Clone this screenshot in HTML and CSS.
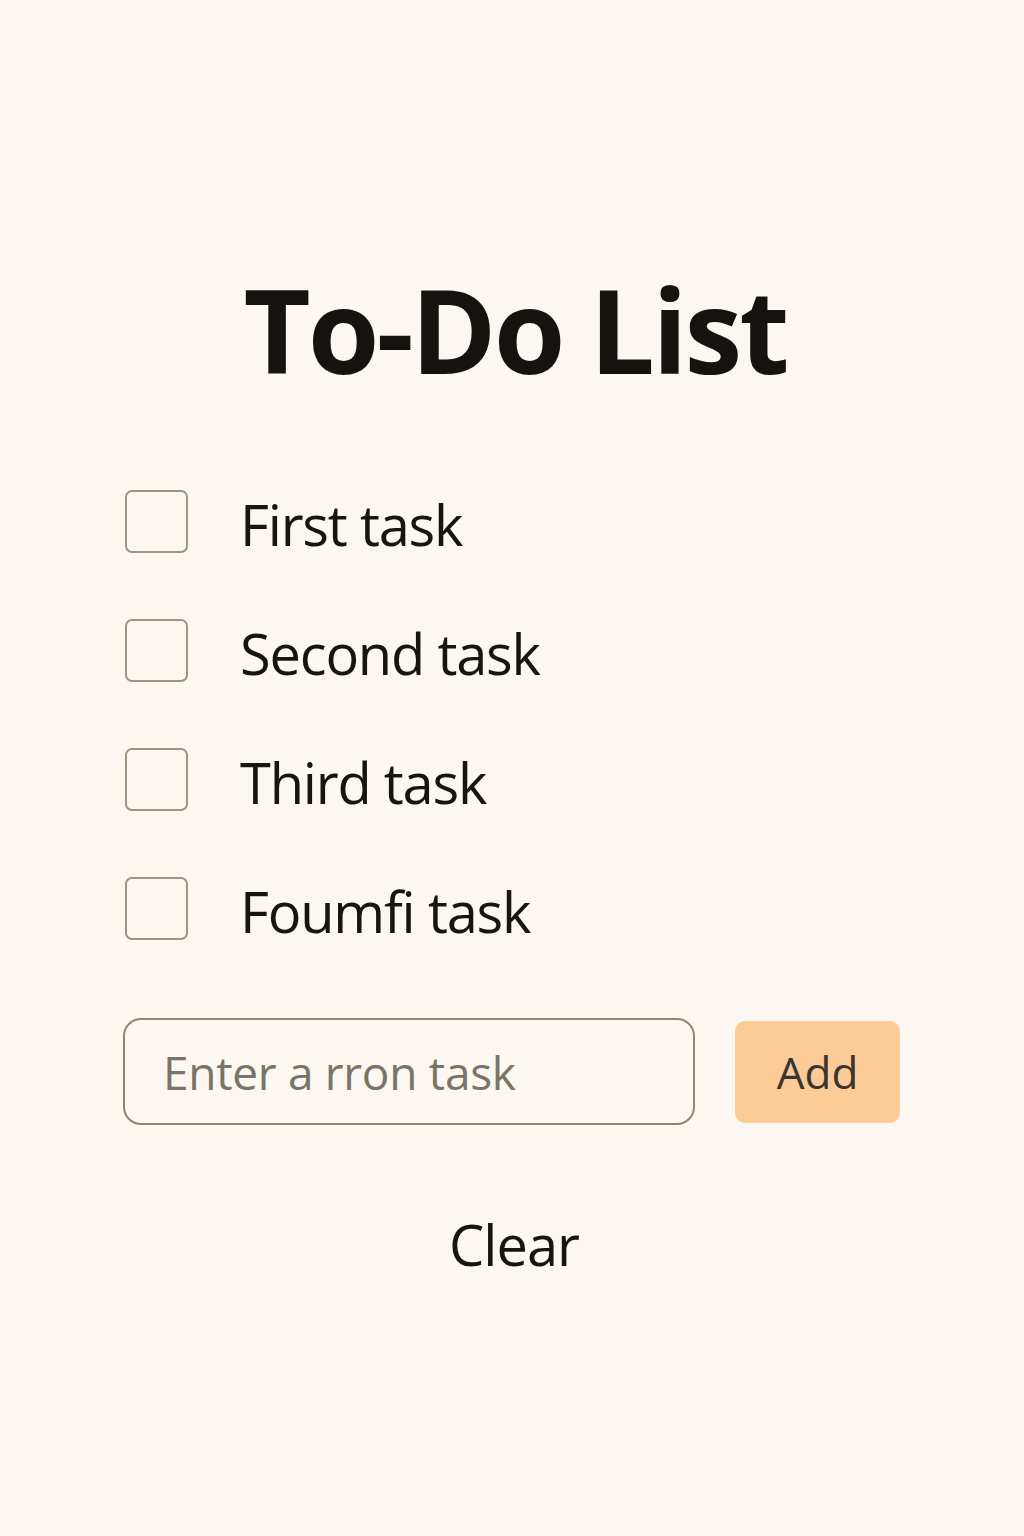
FILE: index.html
```html
<!DOCTYPE html>
<html lang="en">
<head>
    <meta charset="UTF-8">
    <meta name="viewport" content="width=device-width, initial-scale=1.0">
    <title>To-Do List</title>
    <link rel="stylesheet" href="styles.css">
</head>
<body>

    <div class="todo-app">
        <h1 class="todo-title">To-Do List</h1>

        <!-- Task list -->
        <ul class="task-list">
            <li class="task-item">
                <span class="task-check"></span>
                <span class="task-text">First task</span>
            </li>
            <li class="task-item">
                <span class="task-check"></span>
                <span class="task-text">Second task</span>
            </li>
            <li class="task-item">
                <span class="task-check"></span>
                <span class="task-text">Third task</span>
            </li>
            <li class="task-item">
                <span class="task-check"></span>
                <span class="task-text">Foumfi task</span>
            </li>
        </ul>

        <!-- Add form -->
        <div class="add-row">
            <input type="text" class="task-input" placeholder="Enter a rron task">
            <button class="add-btn">Add</button>
        </div>

        <button class="clear-btn">Clear</button>
    </div>

</body>
</html>
```

FILE: styles.css
```css
* {
    margin: 0;
    padding: 0;
    box-sizing: border-box;
}

body {
    font-family: 'Open Sans', 'Noto Sans', sans-serif;
    background: #FCF8F1;
    color: #161510;
    min-height: 100vh;
}

.todo-app {
    width: 778px;
    margin: 0 auto;
    padding-top: 259px;
    display: flex;
    flex-direction: column;
}

.todo-title {
    font-size: 116px;
    font-weight: 700;
    letter-spacing: -3px;
    line-height: 140px;
    text-align: center;
    color: #14130f;
    margin-left: 6px;
}

.task-list {
    list-style: none;
    margin-top: 91px;
    display: flex;
    flex-direction: column;
    gap: 66px;
    padding-left: 2px;
}

.task-item {
    display: flex;
    align-items: center;
    gap: 55px;
    height: 63px;
}

.task-check {
    width: 63px;
    height: 63px;
    border: 2px solid #9C9584;
    border-radius: 7px;
    flex-shrink: 0;
}

.task-text {
    font-size: 56px;
    letter-spacing: -1.2px;
    color: #161510;
    margin-top: 4px;
    margin-left: -3px;
}

.add-row {
    display: flex;
    align-items: center;
    gap: 40px;
    margin-top: 78px;
}

.task-input {
    width: 572px;
    height: 107px;
    border: 2px solid #8E8775;
    border-radius: 18px;
    background: #FCF8F1;
    padding: 0 38px;
    font-family: 'Open Sans', 'Noto Sans', sans-serif;
    font-size: 46px;
    letter-spacing: -0.3px;
    color: #7A7466;
}

.task-input::placeholder {
    color: #7A7466;
}

.add-btn {
    width: 165px;
    height: 102px;
    border: none;
    border-radius: 10px;
    background: #FCCB97;
    font-family: 'Open Sans', 'Noto Sans', sans-serif;
    font-size: 44px;
    color: #3A362F;
}

.clear-btn {
    align-self: center;
    margin-top: 81px;
    border: none;
    background: none;
    font-family: 'Open Sans', 'Noto Sans', sans-serif;
    font-size: 56px;
    letter-spacing: -1px;
    color: #161510;
    margin-left: 4px;
}
```
